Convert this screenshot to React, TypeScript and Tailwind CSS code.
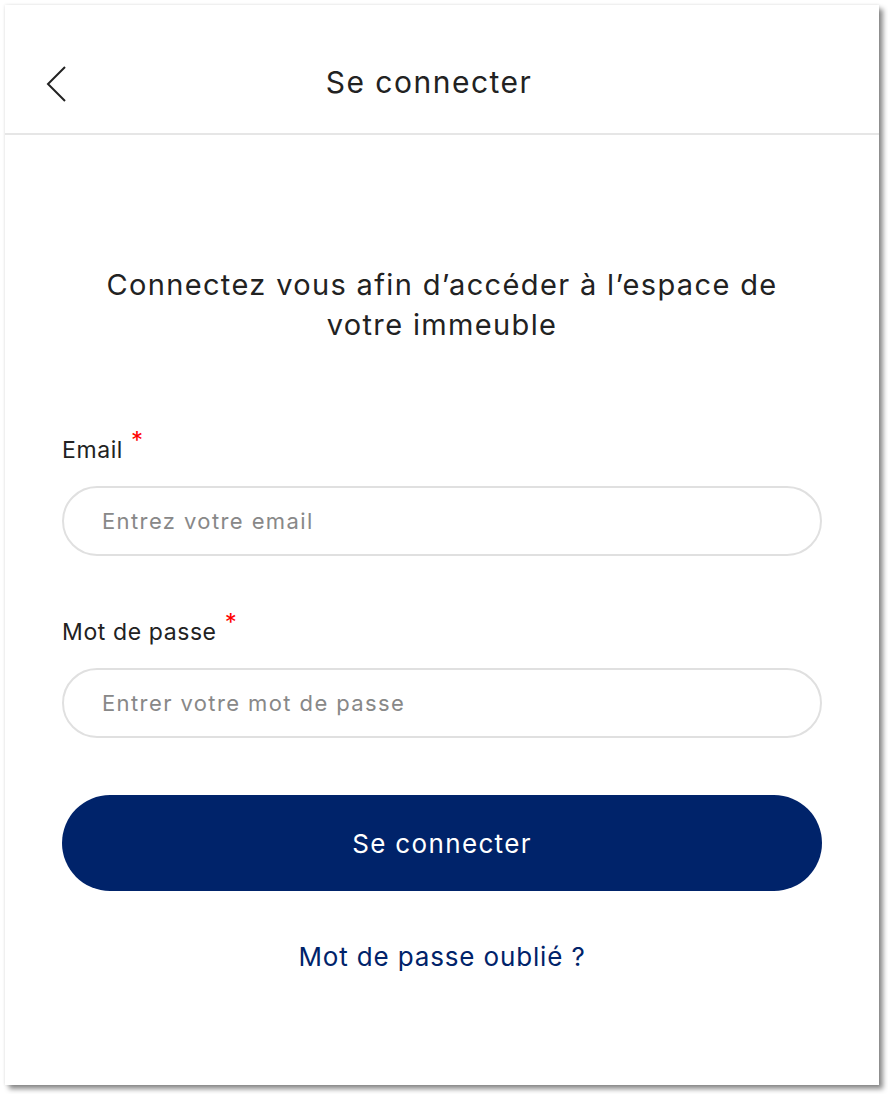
import React from "react";

export default function App() {
  return (
    <div className="w-[888px] h-[1094px] bg-white pt-[5px] pl-[5px]" style={{ fontFamily: "Inter, 'Liberation Sans', sans-serif" }}>
      <div className="w-[874px] h-[1080px] bg-white flex flex-col shadow-[4px_4px_5px_rgba(0,0,0,0.45),0_0_3px_rgba(0,0,0,0.12)]">
        <div className="h-[130px] flex items-center justify-center relative border-b-2 border-[#e6e6e6] pt-[26px] pr-[26px]">
          <svg className="absolute left-[40px] top-[60px]" width="24" height="38" viewBox="0 0 24 38" fill="none">
            <path d="M20 2 L3 19 L20 36" stroke="#222" strokeWidth="2" />
          </svg>
          <span className="text-[30px] leading-[36px] text-[#222] tracking-[1.5px]">Se connecter</span>
        </div>
        <div className="px-[57px] flex flex-col">
          <p className="mt-[130px] text-center text-[29px] leading-[40px] text-[#222] tracking-[1.35px]">
            Connectez vous afin d’accéder à l’espace de<br />votre immeuble
          </p>
          <label className="mt-[90px] h-[30px] text-[23px] leading-[30px] text-[#222] tracking-[0.6px] flex items-start">
            Email<span className="text-[#ff0000] ml-[8px] text-[24px] leading-none mt-[-6px]">*</span>
          </label>
          <div className="mt-[21px] h-[70px] rounded-full border-2 border-[#e0e0e0] flex items-center pl-[38px] text-[22px] text-[#888] tracking-[1.4px]">
            Entrez votre email
          </div>
          <label className="mt-[61px] h-[30px] text-[23px] leading-[30px] text-[#222] tracking-[0.6px] flex items-start">
            Mot de passe<span className="text-[#ff0000] ml-[8px] text-[24px] leading-none mt-[-6px]">*</span>
          </label>
          <div className="mt-[21px] h-[70px] rounded-full border-2 border-[#e0e0e0] flex items-center pl-[38px] text-[22px] text-[#888] tracking-[1.4px]">
            Entrer votre mot de passe
          </div>
          <button className="mt-[57px] h-[96px] rounded-full bg-[#00236a] text-white text-[26px] tracking-[1.35px] flex items-center justify-center">
            Se connecter
          </button>
          <div className="mt-[48px] text-center text-[26px] leading-[36px] text-[#00236a] tracking-[0.85px]">
            Mot de passe oublié ?
          </div>
        </div>
      </div>
    </div>
  );
}
